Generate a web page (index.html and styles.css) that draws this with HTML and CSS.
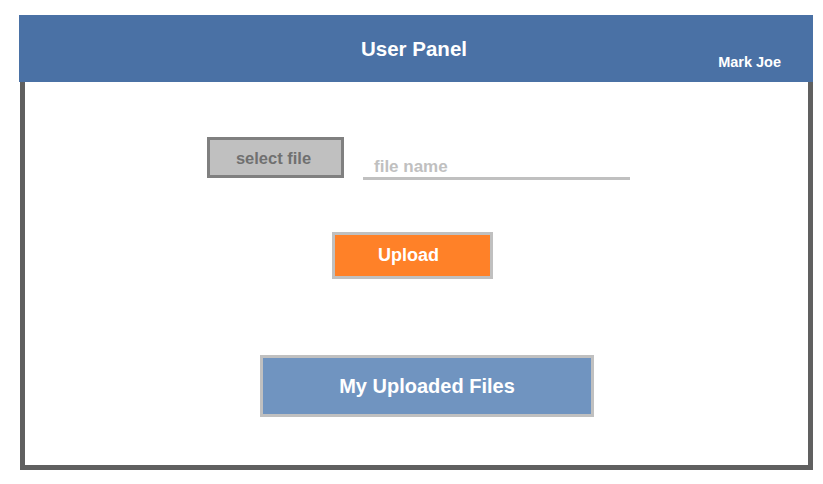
FILE: index.html
```html
<!DOCTYPE html>
<html>
<head>
<meta charset="utf-8">
<link rel="stylesheet" href="styles.css">
</head>
<body>
<div class="panel">
  <header class="panel-header">
    <span></span>
    <h1 class="title">User Panel</h1>
    <span class="user">Mark Joe</span>
  </header>
  <main class="panel-body">
    <div class="file-row">
      <button class="select-btn">select file</button>
      <div class="file-name">file name</div>
    </div>
    <button class="upload-btn">Upload</button>
    <button class="files-btn">My Uploaded Files</button>
  </main>
</div>
</body>
</html>
```
FILE: styles.css
```css
html, body {
  margin: 0;
  padding: 0;
  background: #ffffff;
}
body {
  font-family: "Liberation Sans", Arial, sans-serif;
}
.panel {
  margin: 15px 0 0 19px;
  width: 794px;
}
.panel-header {
  height: 67px;
  background: #4a71a5;
  display: grid;
  grid-template-columns: 1fr auto 1fr;
  align-items: center;
  box-sizing: border-box;
}
.title {
  margin: 0 4px 0 0;
  color: #ffffff;
  font-size: 20.5px;
  font-weight: bold;
  padding-top: 1px;
}
.user {
  justify-self: end;
  align-self: end;
  margin: 0 32px 12px 0;
  color: #ffffff;
  font-size: 14.5px;
  font-weight: bold;
}
.panel-body {
  margin-left: 1px;
  height: 388px;
  box-sizing: border-box;
  border: 5px solid #606060;
  border-top: 0;
  display: flex;
  flex-direction: column;
  align-items: center;
  padding-top: 55px;
}
button {
  font-family: "Liberation Sans", Arial, sans-serif;
  font-weight: bold;
  cursor: pointer;
  padding: 0;
  box-sizing: border-box;
}
.file-row {
  display: flex;
  align-items: flex-start;
  gap: 19px;
  padding-left: 4px;
}
.select-btn {
  width: 137px;
  height: 41px;
  background: #c0c0c0;
  border: 3px solid #808080;
  color: #707070;
  font-size: 16.5px;
  padding: 2px 4px 0 0;
}
.file-name {
  width: 267px;
  height: 43px;
  box-sizing: border-box;
  border-bottom: 3px solid #c0c0c0;
  color: #c0c0c0;
  font-size: 17px;
  font-weight: bold;
  padding: 20px 0 0 11px;
}
.upload-btn {
  margin: 52px 8px 0 0;
  width: 161px;
  height: 47px;
  background: #ff8128;
  border: 3px solid #c0c0c0;
  color: #ffffff;
  font-size: 18px;
  padding-right: 8px;
}
.files-btn {
  margin: 76px 0 0 21px;
  width: 334px;
  height: 62px;
  background: #7094c0;
  border: 3px solid #c0c0c0;
  color: #ffffff;
  font-size: 20px;
}
```
